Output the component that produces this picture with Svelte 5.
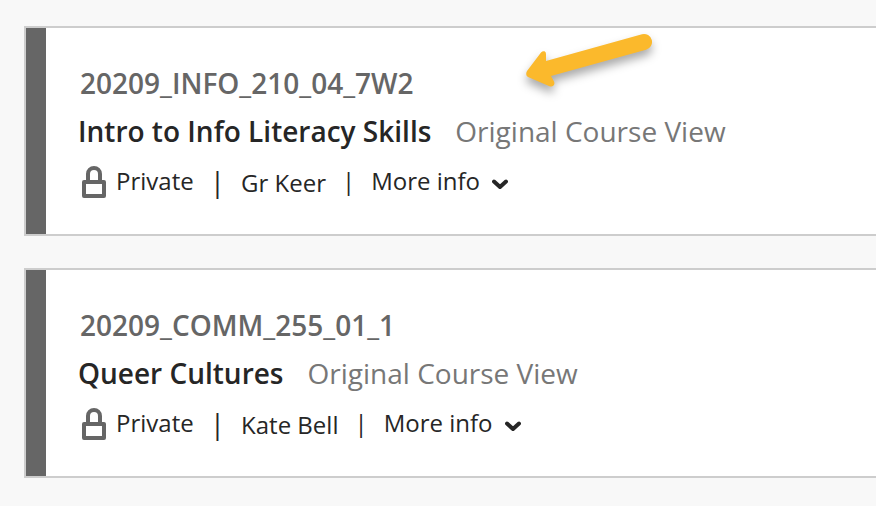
<script>
  const courses = [
    { id: '20209_INFO_210_04_7W2', title: 'Intro to Info Literacy Skills', instructor: 'Gr Keer' },
    { id: '20209_COMM_255_01_1', title: 'Queer Cultures', instructor: 'Kate Bell' }
  ];
</script>

<main>
  {#each courses as course}
    <article>
      <div class="id">{course.id}</div>
      <div class="heading">
        <a href="#course">{course.title}</a>
        <span class="view">Original Course View</span>
      </div>
      <div class="details">
        <svg class="lock" viewBox="0 0 24 32" aria-hidden="true">
          <path d="M6 16V8a6 6 0 0 1 12 0v8M2 16h20v14H2z" />
        </svg>
        <span class="upper">Private</span>
        <span class="upper bar tall">|</span>
        <span class="lower">{course.instructor}</span>
        <span class="upper bar">|</span>
        <button class="upper" type="button">
          More info
          <svg class="chevron" viewBox="0 0 16 12" aria-hidden="true"><path d="M2 3.5l6 5.5 6-5.5" /></svg>
        </button>
      </div>
    </article>
  {/each}
  <svg class="arrow" viewBox="0 0 160 90" aria-hidden="true">
    <path d="M17 51 L31 32.5 Q32.5 30.8 34.5 31.3 Q36 32 36 34 L36 41 L132 14.2 A8 8 0 0 1 136 29.8 L41 56 L44 61.5 Q45 64 43.5 65.5 Q42 67 39.5 66.2 L18 57 Q15 55 17 51Z" />
  </svg>
</main>

<style>
  :global(body) { margin: 0; background: #f8f8f8; }
  main {
    position: relative;
    display: flex;
    flex-direction: column;
    gap: 32px;
    padding: 26px 0 28px 24px;
    overflow: hidden;
    font-family: "Open Sans", sans-serif;
    color: #262626;
  }
  article {
    border: 2px solid #cdcdcd;
    border-right: 0;
    background: #fff;
    box-shadow: inset 20px 0 #666;
    padding: 35px 24px 32px 52px;
  }
  .id { padding-left: 2px; font-size: 28px; line-height: 40px; font-weight: 600; color: #666; }
  .heading { display: flex; gap: 24px; margin-top: 8px; font-size: 28px; line-height: 40px; white-space: nowrap; }
  a { color: #262626; font-weight: 600; text-decoration: none; }
  .view { color: #777; }
  .details { display: flex; align-items: center; height: 40px; margin-top: 11px; padding-left: 4px; font-size: 24px; line-height: 36px; white-space: nowrap; }
  .lock { width: 24px; height: 32px; margin-right: 10px; fill: none; stroke: #666; stroke-width: 4; stroke-linejoin: round; }
  .bar { margin: 0 16px; }
  .tall { font-size: 28px; }
  button { display: flex; align-items: center; gap: 12px; padding: 0; border: 0; background: none; color: inherit; font: inherit; cursor: pointer; }
  .upper { padding-bottom: 2px; }
  .lower { padding-top: 2px; }
  .chevron { width: 16px; height: 12px; margin-top: 6px; fill: none; stroke: #262626; stroke-width: 4; stroke-linecap: round; stroke-linejoin: round; }
  .arrow { position: absolute; left: 510px; top: 20px; width: 160px; height: 90px; fill: #fbb92c; overflow: visible; filter: drop-shadow(0 6px 5px #0005); }
</style>
